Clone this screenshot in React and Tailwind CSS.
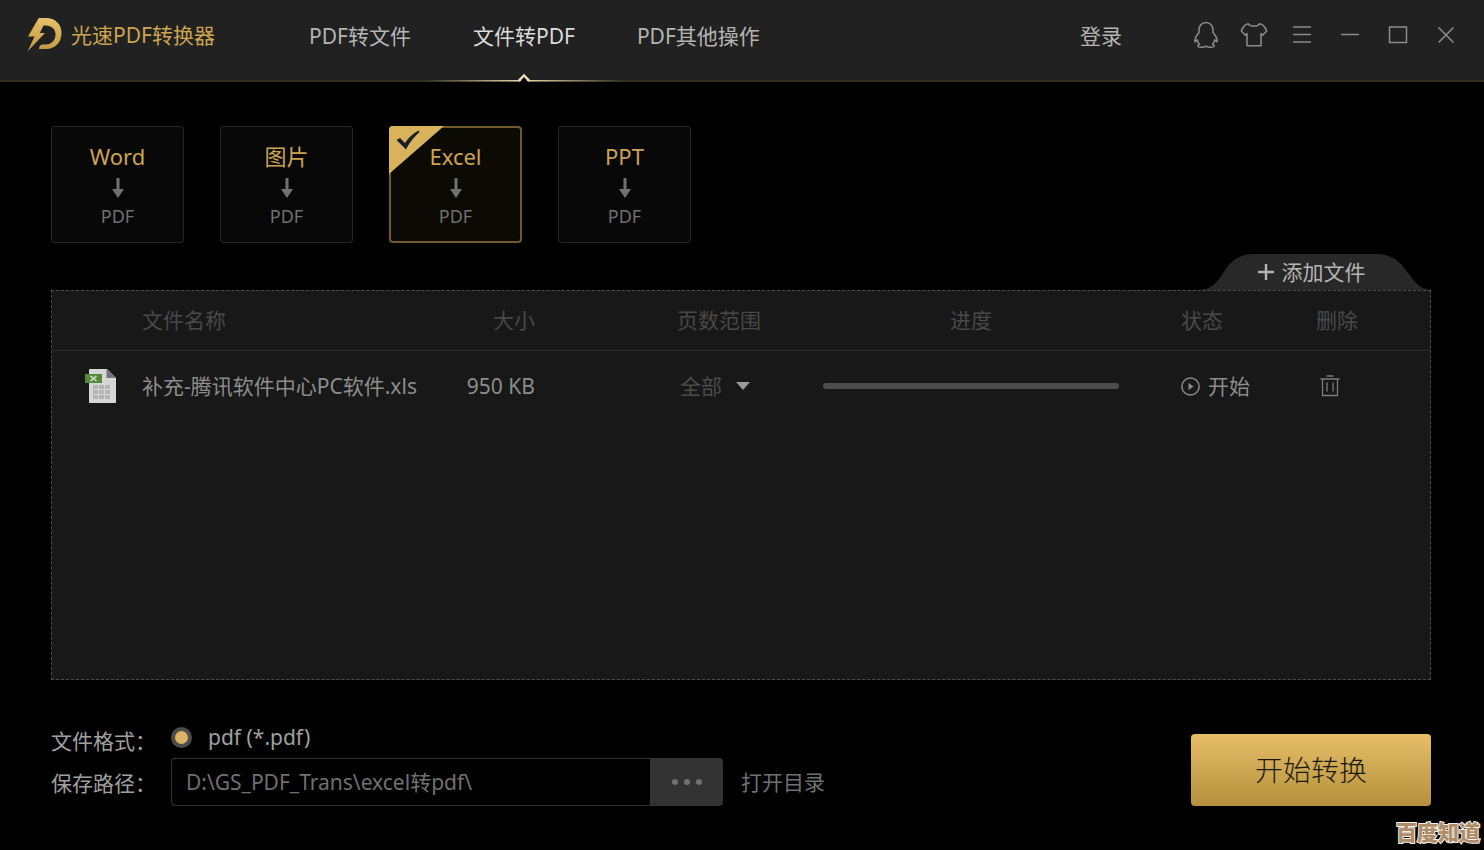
// App.jsx
import React, { useState } from 'react';

const tabs = ['PDF转文件', '文件转PDF', 'PDF其他操作'];
const sources = ['Word', '图片', 'Excel', 'PPT'];

const Logo = () => (
  <svg width="36" height="36" viewBox="0 0 36 36" aria-hidden="true">
    <defs>
      <linearGradient id="logo-gold" x1="0" y1="0" x2="0" y2="1">
        <stop offset="0" stopColor="#e8c06a" />
        <stop offset="1" stopColor="#bf983f" />
      </linearGradient>
    </defs>
    <path
      fill="url(#logo-gold)"
      d="M11 2.2C11.4 1.4 12 1 13 1H19C28 1 34.5 7 34.5 16C34.5 25.500 28 32 19 32H12C12 29.500 13.500 27.500 16 27.500H19C24.500 27.500 28.500 23 28.500 17.500C28.500 12 24.500 8.500 18.500 8.500H16.500L12.800 16H18L0.500 34.500L7.500 19.500H1Z"
    />
  </svg>
);

const PenguinIcon = () => (
  <svg width="26" height="28" viewBox="0 0 26 28" fill="none" stroke="currentColor" strokeWidth="1.5" strokeLinejoin="round">
    <path d="M13 1.500C8.500 1.500 6 5 6 9V11.500C3.500 14.500 1.800 17.500 1.800 20C1.800 21.200 2.600 20.800 4.300 18.800C4.600 20.600 5.300 22 6.500 23.200C5.200 23.700 4.800 24.300 4.800 25C5 26.600 11 26.800 13 25.200C15 26.800 21 26.600 21.200 25C21.200 24.300 20.800 23.700 19.500 23.200C20.700 22 21.400 20.600 21.700 18.800C23.400 20.800 24.200 21.200 24.200 20C24.200 17.500 22.500 14.500 20 11.500V9C20 5 17.500 1.500 13 1.500Z" />
  </svg>
);

const ShirtIcon = () => (
  <svg width="28" height="26" viewBox="0 0 28 26" fill="none" stroke="currentColor" strokeWidth="1.5" strokeLinejoin="round">
    <path d="M8.500 1.800C10 4.800 18 4.800 19.500 1.800C23 2.200 25 4.500 26.700 9L22.500 13.200L21 11.500V23.700H7V11.500L5.500 13.200L1.300 9C3 4.500 5 2.200 8.500 1.800Z" />
  </svg>
);

const MenuIcon = () => (
  <svg width="18" height="20" viewBox="0 0 18 20" stroke="currentColor" strokeWidth="1.5">
    <path d="M0 2H18M0 9.500H18M0 17H18" />
  </svg>
);

const MinimizeIcon = () => (
  <svg width="18" height="18" viewBox="0 0 18 18" stroke="currentColor" strokeWidth="1.5">
    <path d="M0 8.500H18" />
  </svg>
);

const MaximizeIcon = () => (
  <svg width="20" height="18" viewBox="0 0 20 18" fill="none" stroke="currentColor" strokeWidth="1.5">
    <path d="M1.500 1H18.500V16.500H1.500Z" />
  </svg>
);

const CloseIcon = () => (
  <svg width="16" height="16" viewBox="0 0 16 16" stroke="currentColor" strokeWidth="1.5">
    <path d="M0.500 0.500L15.500 15.500M15.500 0.500L0.500 15.500" />
  </svg>
);

const windowButtons = [
  { label: 'QQ', Icon: PenguinIcon },
  { label: '换肤', Icon: ShirtIcon },
  { label: '菜单', Icon: MenuIcon },
  { label: '最小化', Icon: MinimizeIcon },
  { label: '最大化', Icon: MaximizeIcon },
  { label: '关闭', Icon: CloseIcon },
];

const XlsIcon = () => (
  <svg width="32" height="36" viewBox="0 0 32 36" aria-hidden="true">
    <path d="M5 1H22L31 10V34C31 34.600 30.600 35 30 35H5C4.400 35 4 34.600 4 34V2C4 1.400 4.400 1 5 1Z" fill="#d6d6d6" />
    <path d="M21.500 1L31 10H21.500Z" fill="#74747a" />
    <path
      fill="#b5b5b5"
      d="M8 17h5v4h-5zM14 17h5v4h-5zM20 17h5v4h-5zM8 22h5v4h-5zM14 22h5v4h-5zM20 22h5v4h-5zM8 27h5v4h-5zM14 27h5v4h-5zM20 27h5v4h-5z"
    />
    <path d="M0 6H17V15H0Z" fill="#55883a" />
    <path d="M5.500 8L11.500 13M11.500 8L5.500 13" stroke="#d5e3cc" strokeWidth="1.6" />
  </svg>
);

const PlayIcon = () => (
  <svg width="19" height="19" viewBox="0 0 19 19" aria-hidden="true">
    <circle cx="9.500" cy="9.500" r="8.600" fill="none" stroke="currentColor" strokeWidth="1.5" />
    <path d="M7.500 6L12.500 9.500L7.500 13Z" fill="currentColor" />
  </svg>
);

const TrashIcon = () => (
  <svg width="20" height="22" viewBox="0 0 20 22" fill="none" stroke="currentColor" strokeWidth="1.3">
    <path d="M6.500 1H13.500M0.500 4H19.500M2.500 4V20.500H17.500V4M7 7.500V16.500M13 7.500V16.500" />
  </svg>
);

const SourceCard = ({ name, active, onClick }) => (
  <button
    type="button"
    aria-pressed={active}
    onClick={onClick}
    className={`relative flex h-[117px] w-[133px] flex-col items-center overflow-hidden rounded ${
      active ? 'bg-[#0b0a04] ring-2 ring-inset ring-[#735a2b]' : 'bg-[#080808] ring-1 ring-inset ring-[#252525]'
    }`}
  >
    {active && (
      <svg className="absolute left-0 top-0" width="56" height="48" viewBox="0 0 56 48" aria-hidden="true">
        <path d="M0 0H55L0 48Z" fill="#d9b25c" />
        <path d="M7.500 14L11 12L16 17C19 12 24 7.500 29.500 4.500L30.500 6C25 11 20 17 17 23.500Z" fill="#1c2127" />
      </svg>
    )}
    <span className="relative mt-4 text-[22px] leading-7 text-[#cba352]">{name}</span>
    <svg className="mt-2" width="12" height="20" viewBox="0 0 12 20" fill="#717171" aria-hidden="true">
      <path d="M4.500 0H7.500V11H12L6 20L0 11H4.500Z" />
    </svg>
    <span className="mt-1.5 text-lg leading-6 text-[#707070]">PDF</span>
  </button>
);

const App = () => {
  const [tab, setTab] = useState('文件转PDF');
  const [source, setSource] = useState('Excel');
  const [path, setPath] = useState('D:\\GS_PDF_Trans\\excel转pdf\\');

  return (
    <div className="relative flex min-h-screen flex-col bg-black font-['Noto_Sans','Noto_Sans_CJK_SC',sans-serif] text-[21px] leading-8 text-[#a0a0a0]">
      <header className="flex h-[82px] items-start justify-between border-b-2 border-[#312d22] bg-[#212121] pl-[27px] pr-[14px]">
        <div className="flex h-full">
          <div className="flex h-[70px] w-[282px] items-center gap-2 text-[#cda550]">
            <Logo />
            <span>光速PDF转换器</span>
          </div>
          <nav className="flex gap-[62px]">
            {tabs.map((name) => (
              <button
                key={name}
                type="button"
                onClick={() => setTab(name)}
                className={`relative h-[72px] ${name === tab ? 'text-[#dcdcdc]' : 'text-[#b4b4b4]'}`}
              >
                {name}
                {name === tab && (
                  <svg
                    className="absolute left-1/2 top-[73px] -translate-x-1/2"
                    width="200"
                    height="9"
                    viewBox="0 0 200 9"
                    aria-hidden="true"
                  >
                    <defs>
                      <linearGradient id="tab-line">
                        <stop offset="0" stopColor="#f0dcb0" stopOpacity="0" />
                        <stop offset="0.5" stopColor="#f0dcb0" />
                        <stop offset="1" stopColor="#f0dcb0" stopOpacity="0" />
                      </linearGradient>
                    </defs>
                    <rect y="7" width="200" height="1.4" fill="url(#tab-line)" />
                    <path d="M96 9L100 4L104 9Z" fill="#000" />
                    <path d="M94.500 8L100 2.500L105.500 8" fill="none" stroke="#f0dcb8" strokeWidth="2.4" />
                  </svg>
                )}
              </button>
            ))}
          </nav>
        </div>

        <div className="flex h-[70px] items-center">
          <button type="button" className="mr-[60px] pt-0.5 text-[#b4b4b4]">登录</button>
          {windowButtons.map(({ label, Icon }) => (
            <button
              key={label}
              type="button"
              aria-label={label}
              className="flex h-12 w-12 items-center justify-center text-[#8c8c8c] hover:text-white"
            >
              <Icon />
            </button>
          ))}
        </div>
      </header>

      <main className="flex flex-1 flex-col pb-11 pl-[51px] pr-[53px] pt-11">
        <div className="flex gap-9">
          {sources.map((name) => (
            <SourceCard key={name} name={name} active={name === source} onClick={() => setSource(name)} />
          ))}
        </div>

        <div className="mt-[11px] flex justify-end">
          <button type="button" className="relative flex h-9 w-[231px] items-center justify-center gap-2 pr-2 text-[#b4b4b4]">
            <svg className="absolute inset-0" width="231" height="36" viewBox="0 0 231 36" aria-hidden="true">
              <path d="M0 36C27 34 20 0 54 0H176C210 0 206 34 231 36Z" fill="#282828" />
            </svg>
            <svg className="relative" width="16" height="16" viewBox="0 0 16 16" aria-hidden="true">
              <path d="M8 0V16M0 8H16" stroke="currentColor" strokeWidth="2.4" />
            </svg>
            <span className="relative">添加文件</span>
          </button>
        </div>

        <section className="flex-1 border border-dashed border-[#4c4c4c] bg-[#181818]">
          <table className="w-full table-fixed text-left">
            <thead>
              <tr className="h-[59px] border-b border-[#2a2a2a] text-[#484848]">
                <th className="w-[90px]" aria-label="类型" />
                <th className="font-normal">文件名称</th>
                <th className="w-[100px] text-right font-normal">大小</th>
                <th className="w-[288px] pl-20 text-center font-normal">页数范围</th>
                <th className="w-[296px] text-center font-normal">进度</th>
                <th className="w-[197px] pl-[62px] font-normal">状态</th>
                <th className="w-[114px] font-normal">删除</th>
              </tr>
            </thead>
            <tbody>
              <tr className="h-[72px] text-[#8c8c8c]">
                <td>
                  <div className="flex justify-center pl-2">
                    <XlsIcon />
                  </div>
                </td>
                <td className="whitespace-nowrap">补充-腾讯软件中心PC软件.xls</td>
                <td className="whitespace-nowrap text-right">950 KB</td>
                <td className="pl-18">
                  <div className="relative mx-auto flex w-[70px] items-center">
                    <select aria-label="页数范围" className="w-full appearance-none bg-transparent text-[#4c4c4c]">
                      <option>全部</option>
                    </select>
                    <svg className="pointer-events-none absolute right-0" width="14" height="8" viewBox="0 0 14 8" aria-hidden="true">
                      <path d="M0 0H14L7 8Z" fill="#9a9a9a" />
                    </svg>
                  </div>
                </td>
                <td>
                  <div role="progressbar" aria-label="进度" aria-valuenow={0} className="h-1.5 rounded-full bg-[#4c4c4c]" />
                </td>
                <td className="pl-[62px]">
                  <button type="button" className="flex items-center gap-2">
                    <PlayIcon />
                    开始
                  </button>
                </td>
                <td className="pl-1">
                  <button type="button" aria-label="删除" className="block text-[#7c7c7c]">
                    <TrashIcon />
                  </button>
                </td>
              </tr>
            </tbody>
          </table>
        </section>

        <footer className="mt-9 flex items-end justify-between">
          <div className="flex">
            <div className="w-[120px] pt-1 leading-[42px]">
              <div id="format-label">文件格式：</div>
              <label htmlFor="save-path" className="block">保存路径：</label>
            </div>
            <div>
              <div role="radiogroup" aria-labelledby="format-label" className="flex h-[42px] items-center">
                <label className="flex items-center gap-4">
                  <input
                    type="radio"
                    name="format"
                    defaultChecked
                    className="size-[21px] appearance-none rounded-full border-4 border-[#4c4c4c] checked:bg-[#dcb464]"
                  />
                  pdf (*.pdf)
                </label>
              </div>
              <div className="flex h-12">
                <input
                  id="save-path"
                  type="text"
                  value={path}
                  onChange={(e) => setPath(e.target.value)}
                  className="w-[479px] rounded-l-sm border border-r-0 border-[#333] bg-black pl-3.5 text-[#707070] outline-none"
                />
                <button
                  type="button"
                  aria-label="浏览"
                  className="flex w-[73px] items-center justify-center gap-1.5 rounded-r-sm bg-[#333]"
                >
                  <span className="size-1.5 rounded-full bg-[#707070]" />
                  <span className="size-1.5 rounded-full bg-[#707070]" />
                  <span className="size-1.5 rounded-full bg-[#707070]" />
                </button>
                <a href="#" className="ml-[18px] self-center text-[#707070]">打开目录</a>
              </div>
            </div>
          </div>
          <button
            type="button"
            className="h-[72px] w-60 rounded bg-linear-to-b from-[#e6be68] to-[#b6903c] text-[28px] font-light text-[#1c1a14]"
          >
            开始转换
          </button>
        </footer>
      </main>

      <span className="absolute bottom-1 right-1 font-black leading-7 text-[#b08d68] [paint-order:stroke_fill] [-webkit-text-stroke:2px_#f4f0ea]">
        百度知道
      </span>
    </div>
  );
};

export default App;
